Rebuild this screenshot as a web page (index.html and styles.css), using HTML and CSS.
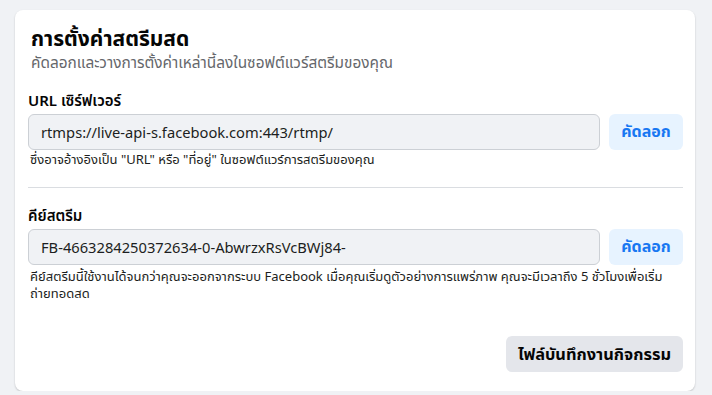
FILE: index.html
```html
<!DOCTYPE html>
<html lang="th">
<head>
<meta charset="utf-8">
<link rel="stylesheet" href="styles.css">
</head>
<body>
<div class="card">
  <div class="header">
    <h1 class="title">การตั้งค่าสตรีมสด</h1>
    <div class="subtitle">คัดลอกและวางการตั้งค่าเหล่านี้ลงในซอฟต์แวร์สตรีมของคุณ</div>
  </div>
  <div class="field">
    <div class="label">URL เซิร์ฟเวอร์</div>
    <div class="row">
      <div class="input">rtmps://live-api-s.facebook.com:443/rtmp/</div>
      <button class="copy">คัดลอก</button>
    </div>
    <div class="help">ซึ่งอาจอ้างอิงเป็น "URL" หรือ "ที่อยู่" ในซอฟต์แวร์การสตรีมของคุณ</div>
  </div>
  <div class="divider"></div>
  <div class="field">
    <div class="label">คีย์สตรีม</div>
    <div class="row">
      <div class="input">FB-4663284250372634-0-AbwrzxRsVcBWj84-</div>
      <button class="copy">คัดลอก</button>
    </div>
    <div class="help help-multi">คีย์สตรีมนี้ใช้งานได้จนกว่าคุณจะออกจากระบบ Facebook เมื่อคุณเริ่มดูตัวอย่างการแพร่ภาพ คุณจะมีเวลาถึง 5 ชั่วโมงเพื่อเริ่มถ่ายทอดสด</div>
  </div>
  <div class="footer">
    <button class="log">ไฟล์บันทึกงานกิจกรรม</button>
  </div>
</div>
</body>
</html>
```
FILE: styles.css
```css
html, body {
  margin: 0;
  padding: 0;
  background: #f0f2f5;
}
body {
  font-family: "Noto Sans", "Noto Sans Thai", "DejaVu Sans", sans-serif;
  color: #050505;
  padding: 10px 17px 0 15px;
}
.card {
  background: #fff;
  border-radius: 8px;
  box-shadow: 0 1px 2px rgba(0,0,0,0.2);
  padding: 16px 12px 19px 13px;
  height: 381px;
  box-sizing: border-box;
  display: flex;
  flex-direction: column;
}
.header {
  padding-left: 3px;
}
.title {
  margin: 0;
  font-size: 21px;
  font-weight: 700;
  line-height: 24px;
}
.subtitle {
  font-size: 15.4px;
  color: #65676b;
  line-height: 20px;
  margin-top: 3px;
}
.field {
  margin-top: 17px;
}
.label {
  font-size: 15px;
  font-weight: 600;
  line-height: 20px;
  margin-bottom: 4px;
}
.row {
  display: flex;
  gap: 9px;
}
.input {
  flex: 1;
  height: 36px;
  box-sizing: border-box;
  background: #f0f2f5;
  border: 1px solid #ccd0d5;
  border-radius: 6px;
  font-size: 14.7px;
  line-height: 34px;
  padding-left: 12px;
  color: #1c1e21;
}
.copy {
  width: 74px;
  height: 36px;
  border: none;
  border-radius: 6px;
  background: #e7f3ff;
  color: #1877f2;
  font-family: inherit;
  font-size: 16px;
  font-weight: 700;
  padding: 0;
}
.help {
  font-size: 13px;
  line-height: 16px;
  margin-top: 1px;
  padding-left: 2px;
  color: #1c1e21;
}
.help-multi {
  margin-top: 3px;
  line-height: 17px;
}
.divider {
  height: 1px;
  background: #dadde1;
  margin-top: 20px;
}
.footer {
  margin-top: auto;
  display: flex;
  justify-content: flex-end;
}
.log {
  height: 36px;
  padding: 0 12px;
  border: none;
  border-radius: 6px;
  background: #e4e6eb;
  color: #050505;
  font-family: inherit;
  font-size: 16.4px;
  font-weight: 700;
}
```
